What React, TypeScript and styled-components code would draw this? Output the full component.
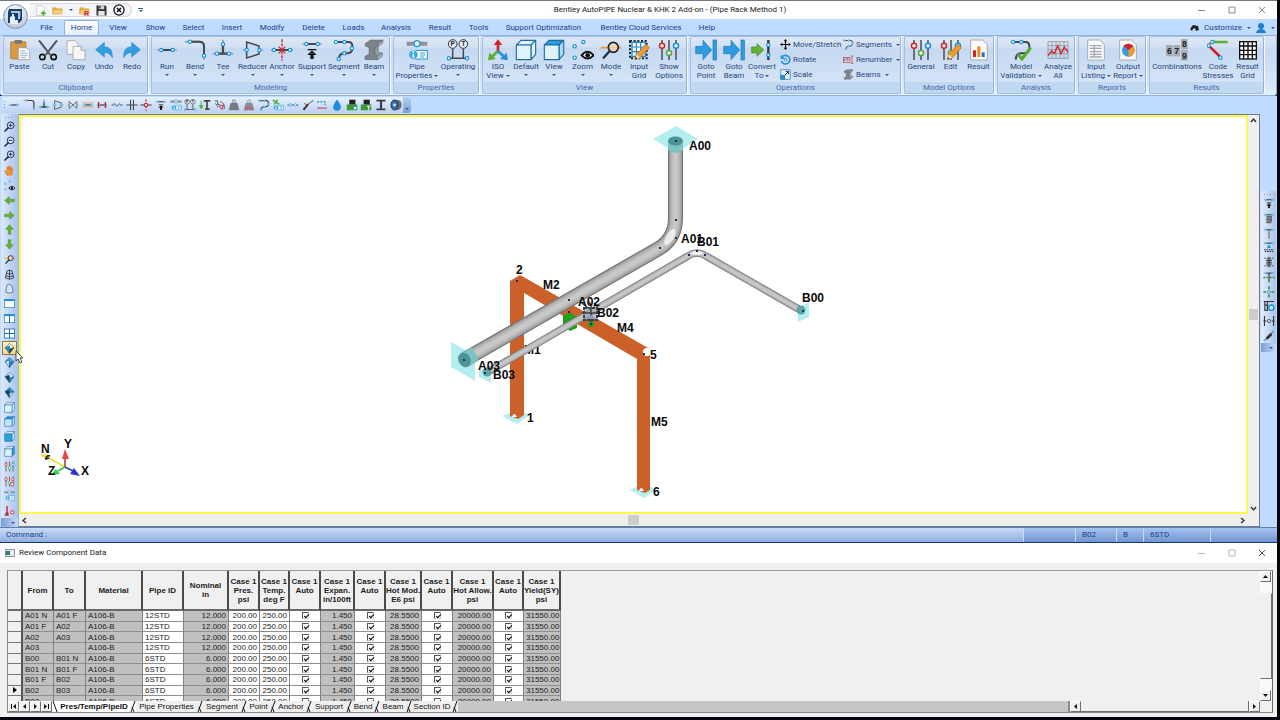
import React from "react";
import styled, { createGlobalStyle } from "styled-components";

const UI = 'Roboto, "Open Sans", sans-serif';
const ARIAL = '"Liberation Sans", Arial, sans-serif';

const Global = createGlobalStyle`
  * { box-sizing: border-box; }
  html, body { margin: 0; height: 100%; background: #05050d; }
  #root { height: 100%; }
  button { font: inherit; color: inherit; border: 0; background: none; padding: 0; margin: 0; cursor: default; }
  svg { display: block; }
`;

/* ---------- drawing primitives (66 x 66 grid) ---------- */

const BLUE = "#1793d8";
const DARK = "#45484d";
const PALE = "#a3a9b1";

const Node = ({ x, y, r = 5, c = BLUE }: { x: number; y: number; r?: number; c?: string }) => (
  <circle cx={x} cy={y} r={r} fill="#eaf8ff" stroke={c} strokeWidth={3.4} />
);
const Pipe = ({ d, c = DARK, w = 6 }: { d: string; c?: string; w?: number }) => (
  <path d={d} fill="none" stroke={c} strokeWidth={w} strokeLinejoin="round" />
);

const Cube = ({ top = "#dff3fd", front = "#dff3fd", side = "#dff3fd" }) => (
  <g stroke="#1c6ea6" strokeWidth={3.4} strokeLinejoin="round">
    <path d="M4 18 L18 4 H62 L48 18 Z" fill={top} />
    <path d="M48 18 L62 4 V46 L48 62 Z" fill={side} />
    <path d="M4 18 H48 V62 H4 Z" fill={front} />
  </g>
);
const Sliders = ({ a = "#d3222a", b = "#4fa63a", c = BLUE }) => (
  <g>
    <path d="M12 3 V63 M33 3 V63 M54 3 V63" stroke="#4a4e55" strokeWidth={4.5} />
    <g fill="#fff" strokeWidth={4.5}>
      <circle cx={12} cy={20} r={7.5} stroke={a} />
      <circle cx={33} cy={42} r={7.5} stroke={b} />
      <circle cx={54} cy={20} r={7.5} stroke={c} />
    </g>
  </g>
);
const Pencil = () => (
  <g>
    <path d="M22 62 L26 46 L54 16 L64 26 L37 56 Z" fill="#f29a2e" stroke="#a8641a" strokeWidth={2} />
    <path d="M22 62 L26 46 L37 56 Z" fill="#f5dcb8" />
    <path d="M22 62 L24 54 L29 59 Z" fill="#333" />
  </g>
);
const Lens = ({ sign }: { sign?: "+" | "-" | "o" }) => (
  <g fill="none" stroke="#20304a">
    <circle cx={40} cy={26} r={20} strokeWidth={6} fill="#d9e9fb" />
    <path d="M25 41 L6 60" strokeWidth={10} strokeLinecap="round" />
    {sign && <path d="M29 26 H51" strokeWidth={6} />}
    {sign && sign !== "-" && <path d="M40 15 V37" strokeWidth={6} />}
  </g>
);
const Iso = ({ a, b, c }: { a: string; b: string; c: string }) => (
  <g stroke="#1d5d86" strokeWidth={3.5} strokeLinejoin="round">
    <path d="M33 3 L60 28 L33 36 L6 28 Z" fill={a} />
    <path d="M6 28 L33 18 V64 Z" fill={b} />
    <path d="M60 28 L33 38 V64 Z" fill={c} />
  </g>
);
const Arrow = ({ turn = 0 }: { turn?: number }) => (
  <path
    transform={`rotate(${turn} 33 33)`}
    d="M4 25 H34 V10 L62 33 L34 56 V41 H4 Z"
    fill="#62b32f"
    stroke="#3d8420"
    strokeWidth={2.5}
  />
);
const Goto = () => (
  <g fill="#2f9be0" stroke="#1b78b5" strokeWidth={2}>
    <path d="M2 22 H24 V4 L50 33 L24 62 V44 H2 Z" />
    <rect x={54} y={3} width={10} height={60} />
  </g>
);
const Page = () => <path d="M8 3 H44 L58 17 V63 H8 Z" fill="#fafafa" stroke="#9a9fa6" strokeWidth={2.5} />;
const Weight = ({ c = "#777c83" }) => (
  <g>
    <path d="M14 22 H52 L62 62 H4 Z" fill={c} />
    <circle cx={33} cy={14} r={9} fill="none" stroke={c} strokeWidth={5} />
  </g>
);
const Info = () => (
  <g>
    <rect x={28} y={34} width={36} height={26} fill="#fff" stroke={BLUE} strokeWidth={3} />
    <path d="M42 42 H58 M42 48 H58 M42 54 H54" stroke={BLUE} strokeWidth={2.6} />
    <circle cx={22} cy={47} r={14} fill="#36a9e1" stroke="#e7f6ff" strokeWidth={2} />
    <path d="M22 44 V56 M22 37 V41" stroke="#fff" strokeWidth={5} />
  </g>
);
const IBeam = () => (
  <g stroke="#5d6269" strokeWidth={1.5}>
    <path d="M6 14 L22 3 H60 L46 14 V22 L36 26 V44 L44 50 V62 H6 V52 L18 46 V26 L6 20 Z" fill="#7d838a" />
    <path d="M46 14 L60 3 V12 L46 22 Z M44 50 L58 42 V52 L44 62 Z" fill="#a5abb2" />
    <path d="M36 26 L46 22 V40 L58 42 L44 50 L36 44 Z" fill="#969ca3" />
  </g>
);
const Eye = () => (
  <g>
    <path d="M29 49 Q46 28 65 49 Q46 68 29 49 Z" fill="#fff" stroke="#111" strokeWidth={6} />
    <circle cx={47} cy={49} r={7} fill="#111" />
  </g>
);
const Zigzag = () => <Pipe d="M3 9 H46 Q58 9 58 22 V28 Q58 42 44 43 H32 Q18 44 17 62" />;
const Bars = ({ c = "#333" }) => <path d="M8 12 H58 M8 54 H58" stroke={c} strokeWidth={5} strokeDasharray="9 5" />;
const Runner = ({ y = 15 }: { y?: number }) => (
  <g>
    <Pipe d={`M3 ${y} H63`} c={PALE} w={5} />
    <Pipe d={`M18 ${y} H50`} />
    <Node x={16} y={y} />
    <Node x={50} y={y} />
  </g>
);
const Undo = () => (
  <path d="M8 32 L34 10 V23 Q60 24 58 56 Q50 40 34 41 V54 Z" fill="#2f9fe2" stroke="#1c7fbd" strokeWidth={1.5} />
);
const Folder = () => (
  <g stroke="#c88a1c" strokeWidth={2}>
    <path d="M4 16 H26 L32 22 H58 V54 H4 Z" fill="#e9aa3a" />
    <path d="M4 54 L10 28 H63 L58 54 Z" fill="#fbd27a" />
  </g>
);

const art: Record<string, React.ReactNode> = {
  paste: (
    <g>
      <rect x={5} y={8} width={46} height={52} rx={3} fill="#d99a45" stroke="#a96d20" strokeWidth={2} />
      <rect x={17} y={3} width={22} height={11} rx={2} fill="#777" />
      <path d="M28 26 H52 L62 36 V62 H28 Z" fill="#f4f7fb" stroke="#8c96a5" strokeWidth={2} />
      <path d="M34 36 H48 M34 43 H56 M34 50 H56 M34 56 H50" stroke="#9aa8bb" strokeWidth={2.5} />
    </g>
  ),
  cut: (
    <g fill="none">
      <path d="M6 4 L40 48 M60 4 L26 48" stroke="#50555c" strokeWidth={6} />
      <circle cx={16} cy={54} r={8} stroke="#111" strokeWidth={5} />
      <circle cx={50} cy={54} r={8} stroke="#111" strokeWidth={5} />
    </g>
  ),
  copy: (
    <g stroke="#8b929c" strokeWidth={2} fill="#f7f7f8">
      <path d="M6 5 H30 L40 15 V46 H6 Z" />
      <path d="M24 22 H48 L60 34 V62 H24 Z" />
      <path d="M48 22 V34 H60" fill="#dfe3e8" />
    </g>
  ),
  undo: <Undo />,
  redo: (
    <g transform="translate(66 0) scale(-1 1)">
      <Undo />
    </g>
  ),
  run: <Runner y={33} />,
  bend: (
    <g>
      <Pipe d="M3 8 H46 Q60 8 60 22 V62" c={PALE} />
      <Pipe d="M18 8 H46 Q60 8 60 22 V48" />
      <Node x={18} y={8} />
      <Node x={60} y={50} />
    </g>
  ),
  tee: (
    <g>
      <Pipe d="M2 44 H64 M33 2 V44" c={PALE} />
      <Pipe d="M16 44 H50 M33 18 V44" w={7} />
      <Node x={33} y={16} />
      <Node x={15} y={44} />
      <Node x={51} y={44} />
    </g>
  ),
  reducer: (
    <g>
      <Pipe d="M2 33 H64" c={PALE} w={5} />
      <path d="M14 9 V57 L51 45 V21 Z" fill="#c9dcf3" stroke={DARK} strokeWidth={4.5} />
      <Node x={14} y={33} />
      <Node x={52} y={33} />
    </g>
  ),
  anchor: (
    <g>
      <Pipe d="M2 33 H64" />
      <path d="M33 1 V65" stroke="#d3222a" strokeWidth={4} strokeDasharray="9 3" />
      <path d="M23 23 L43 43 M43 23 L23 43" stroke="#d3222a" strokeWidth={3.5} />
      <Node x={9} y={33} />
      <Node x={57} y={33} />
    </g>
  ),
  support: (
    <g>
      <Runner />
      <path d="M20 32 H46" stroke="#111" strokeWidth={4} />
      <path d="M33 34 L47 48 H38 V60 H28 V48 H19 Z" fill="#111" />
    </g>
  ),
  segment: (
    <g>
      <Zigzag />
      <Node x={9} y={9} />
      <Node x={34} y={9} />
      <Node x={57} y={28} />
      <Node x={34} y={43} />
      <Node x={17} y={60} />
    </g>
  ),
  beam: <IBeam />,
  pipeProps: (
    <g>
      <path d="M2 14 H64" stroke="#8d939b" strokeWidth={12} />
      <Node x={33} y={14} r={9} />
      <Info />
    </g>
  ),
  operating: (
    <g>
      <g fill="#e4eefb" stroke="#30343a" strokeWidth={3}>
        <circle cx={17} cy={15} r={13} />
        <circle cx={49} cy={15} r={13} />
      </g>
      <g fontFamily={ARIAL} fontSize={19} fontWeight={700} fill="#222" textAnchor="middle">
        <text x={17} y={22}>P</text>
        <text x={49} y={22}>T</text>
      </g>
      <Pipe d="M17 29 V58 M49 29 V58 M4 58 H62" w={4.5} />
      <Node x={6} y={58} />
      <Node x={60} y={58} />
    </g>
  ),
  isoView: (
    <g strokeWidth={8}>
      <path d="M33 38 V14" stroke="#d3222a" />
      <path d="M33 1 L46 18 H20 Z" fill="#d3222a" />
      <path d="M33 36 L14 54" stroke="#5bb030" />
      <path d="M3 64 L7 41 L27 60 Z" fill="#5bb030" />
      <path d="M33 36 L52 54" stroke="#2390dc" />
      <path d="M63 64 L59 41 L39 60 Z" fill="#2390dc" />
    </g>
  ),
  cube: <Cube />,
  cubeTop: <Cube top="#2b9fe0" side="#a9dcf7" />,
  cubeTopSolid: <Cube top="#2b9fe0" front="#bfe6fb" side="#bfe6fb" />,
  cubeFront: <Cube front="#2b9fe0" />,
  cubeSide: <Cube side="#2b9fe0" />,
  zoom: (
    <g>
      <Node x={34} y={9} />
      <Node x={8} y={22} />
      <Node x={8} y={56} />
      <Eye />
    </g>
  ),
  mode: (
    <g>
      <path d="M2 26 H64" stroke="#ee9a3a" strokeWidth={5} />
      <circle cx={40} cy={25} r={15} fill="#f7d9b4" fillOpacity={0.7} stroke="#222" strokeWidth={5} />
      <path d="M29 36 L11 56" stroke="#20304a" strokeWidth={7} strokeLinecap="round" />
    </g>
  ),
  inputGrid: (
    <g>
      <rect x={6} y={6} width={50} height={52} fill="none" stroke="#222" strokeWidth={6} strokeDasharray="6 5" />
      <rect x={12} y={10} width={40} height={42} fill="#fff" stroke="#1c86c8" strokeWidth={4} />
      <path d="M25 10 V52 M38 10 V52 M12 24 H52 M12 38 H52" stroke="#1c86c8" strokeWidth={3.5} />
      <Pencil />
    </g>
  ),
  sliders: <Sliders />,
  slidersRed: (
    <g>
      <Sliders c="#d3222a" />
      <circle cx={50} cy={50} r={10} fill="#fff" stroke="#d3222a" strokeWidth={5} />
    </g>
  ),
  goto: <Goto />,
  convert: (
    <g>
      <path d="M2 24 H18 V14 L38 33 L18 52 V42 H2 Z" fill="#62b32f" stroke="#3d8420" strokeWidth={2} />
      <Pipe d="M52 3 V63" c="#333" w={7} />
      <Node x={52} y={18} />
      <Node x={52} y={48} />
    </g>
  ),
  move: (
    <g fill="#111">
      <path d="M33 10 V56 M10 33 H56" stroke="#111" strokeWidth={7} />
      <path d="M33 0 L44 14 H22 Z M33 66 L44 52 H22 Z M0 33 L14 22 V44 Z M66 33 L52 22 V44 Z" />
    </g>
  ),
  rotate: (
    <g fill="none">
      <path d="M12 18 A26 26 0 1 1 8 42" stroke="#2390dc" strokeWidth={10} />
      <path d="M4 4 V30 H30 Z" fill="#2390dc" />
      <circle cx={34} cy={34} r={8} stroke="#2390dc" strokeWidth={5} />
    </g>
  ),
  scale: (
    <g>
      <rect x={5} y={5} width={56} height={56} fill="#e8f5fd" stroke="#1c6ea6" strokeWidth={4} />
      <rect x={5} y={37} width={24} height={24} fill="#2390dc" stroke="#1c6ea6" strokeWidth={3} />
      <path d="M30 36 L50 16 M34 14 H52 V32" stroke="#20304a" strokeWidth={6} fill="none" />
    </g>
  ),
  renumber: (
    <g fill="none">
      <rect x={3} y={20} width={38} height={30} stroke="#c33" strokeWidth={4} />
      <path d="M10 28 V42 M20 28 H32 M20 36 H32" stroke="#333" strokeWidth={4} />
      <path d="M46 12 H62 M54 12 V56 M46 56 H62" stroke="#c33" strokeWidth={4} />
    </g>
  ),
  edit: (
    <g>
      <Sliders />
      <Pencil />
    </g>
  ),
  result: (
    <g>
      <Page />
      <rect x={15} y={34} width={9} height={20} fill="#d3222a" />
      <rect x={28} y={22} width={9} height={32} fill="#ee8a1c" />
      <rect x={41} y={40} width={9} height={14} fill="#1a6fd0" />
    </g>
  ),
  validation: (
    <g>
      <Zigzag />
      <Node x={9} y={9} />
      <Node x={34} y={9} />
      <path d="M24 46 L36 60 L62 26" fill="none" stroke="#4fae2d" strokeWidth={9} />
    </g>
  ),
  analyze: (
    <g fill="none">
      <path
        d="M3 8 H63 V58 H3 Z M15 8 V58 M27 8 V58 M39 8 V58 M51 8 V58 M3 20 H63 M3 32 H63 M3 44 H63"
        stroke="#85898f"
        strokeWidth={2.2}
      />
      <path d="M3 50 L14 36 L22 44 L32 20 L42 44 L52 24 L63 40" stroke="#d3222a" strokeWidth={4} />
    </g>
  ),
  listing: (
    <g>
      <Page />
      <path d="M14 20 H50 M14 28 H50 M14 38 H50 M14 46 H50 M14 54 H50 M28 20 V56" stroke="#a5a9ae" strokeWidth={4} />
    </g>
  ),
  report: (
    <g>
      <Page />
      <circle cx={34} cy={34} r={19} fill="#2f9be0" />
      <path d="M34 34 L20 20 A19 19 0 0 1 49 22 Z" fill="#d3222a" />
      <path d="M34 34 L49 22 A19 19 0 0 1 34 53 Z" fill="#ee9a2c" />
    </g>
  ),
  codes: (
    <g>
      <path d="M16 9 H62" stroke="#5bb030" strokeWidth={8} />
      <path d="M4 18 L14 9" stroke="#ee9a2c" strokeWidth={8} />
      <path d="M5 20 L40 54" stroke="#c8202a" strokeWidth={8} />
      <Node x={16} y={9} />
      <Node x={5} y={20} />
      <Node x={40} y={56} />
    </g>
  ),
  grid: (
    <g>
      <rect x={8} y={8} width={50} height={52} fill="#fff" stroke="#111" strokeWidth={4} />
      <path d="M20 8 V60 M33 8 V60 M46 8 V60 M8 21 H58 M8 34 H58 M8 47 H58" stroke="#111" strokeWidth={4} />
    </g>
  ),
  newDoc: (
    <g>
      <Page />
      <path d="M50 34 V64 M35 49 H65" stroke="#4fae2d" strokeWidth={9} />
    </g>
  ),
  open: <Folder />,
  openR: (
    <g>
      <Folder />
      <text x={30} y={64} fontFamily={ARIAL} fontSize={42} fontWeight={700} fill="#c8202a">R</text>
    </g>
  ),
  save: (
    <g>
      <path d="M3 3 H56 L63 10 V63 H3 Z" fill="#333" />
      <rect x={17} y={3} width={32} height={22} fill="#cfd4da" />
      <rect x={14} y={36} width={38} height={27} fill="#e8e8e8" />
      <rect x={20} y={6} width={8} height={15} fill="#333" />
    </g>
  ),
  exit: (
    <g fill="none" stroke="#111">
      <circle cx={33} cy={33} r={28} strokeWidth={7} />
      <path d="M22 22 L44 44 M44 22 L22 44" strokeWidth={8} />
    </g>
  ),
  valve: (
    <g>
      <Pipe d="M2 33 H64" c={PALE} w={5} />
      <path d="M12 14 V52 L54 14 V52 Z" fill="#dce8f7" stroke="#5c6570" strokeWidth={5} />
    </g>
  ),
  flange: (
    <g>
      <path d="M4 22 H62 M4 44 H62" stroke="#e5a05a" strokeWidth={5} />
      <Runner y={33} />
    </g>
  ),
  nozzle: (
    <g>
      <Runner y={33} />
      <path d="M14 16 V50 M52 16 V50" stroke="#c8202a" strokeWidth={8} />
    </g>
  ),
  flex: (
    <g>
      <path d="M3 33 H12 Q20 18 26 33 Q33 48 40 33 Q47 18 54 33 H64" fill="none" stroke={DARK} strokeWidth={5} />
      <Node x={12} y={33} r={4} />
      <Node x={54} y={33} r={4} />
    </g>
  ),
  plates: <path d="M2 33 H64 M25 4 V62 M41 4 V62" stroke="#444" strokeWidth={6} />,
  cross: (
    <g>
      <path d="M33 2 V64" stroke="#c8202a" strokeWidth={6} strokeDasharray="12 6" />
      <Pipe d="M2 33 H64" />
      <circle cx={33} cy={33} r={9} fill="#fff" stroke="#c8202a" strokeWidth={6} />
    </g>
  ),
  load: (
    <g>
      <path d="M26 10 H62 M44 10 V56 M34 56 H58" stroke="#444" strokeWidth={9} />
      <path d="M12 10 V40 M2 34 L12 54 L22 34" fill="#4fae2d" stroke="#4fae2d" strokeWidth={5} />
    </g>
  ),
  motion: (
    <g fill="none">
      <path d="M4 10 H20 V30 H34 M8 24 L22 44 M34 14 Q62 22 56 54" stroke="#555" strokeWidth={5} />
      <path d="M28 40 L52 34 L44 58 Z" stroke="#c8202a" strokeWidth={5} />
    </g>
  ),
  weight: <Weight />,
  weightRed: (
    <g>
      <Weight c="#8b8f95" />
      <path d="M14 62 V44 M26 62 V38 M40 62 V38 M52 62 V44" stroke="#d0545a" strokeWidth={5} />
    </g>
  ),
  greenProps: (
    <g>
      <path d="M4 6 L40 30 M30 4 L12 30" stroke="#4fae2d" strokeWidth={8} />
      <Info />
    </g>
  ),
  link: (
    <g>
      <Pipe d="M2 33 H64" w={4} />
      <Node x={18} y={33} r={7} />
      <Node x={46} y={33} r={7} />
    </g>
  ),
  hanger: (
    <g>
      <path d="M8 60 L34 28" stroke="#333" strokeWidth={11} />
      <path d="M34 28 L62 8" stroke="#777" strokeWidth={6} />
      <path d="M12 24 L30 36" stroke="#c8202a" strokeWidth={5} />
    </g>
  ),
  dims: (
    <g>
      <path d="M6 16 H60" stroke={BLUE} strokeWidth={6} strokeDasharray="12 6" />
      <path d="M6 50 H60" stroke="#c8202a" strokeWidth={5} />
      <Node x={50} y={30} r={4} />
    </g>
  ),
  drop: <path d="M33 3 Q56 34 54 44 A21 21 0 0 1 12 44 Q12 32 33 3 Z" fill="#1b8fdc" />,
  personA: (
    <g>
      <path d="M4 30 H62 V62 H4 Z" fill="#3b9a36" />
      <rect x={18} y={4} width={34} height={26} fill="#222" />
      <Node x={50} y={50} r={9} />
    </g>
  ),
  personB: (
    <g>
      <path d="M4 30 H62 V62 H4 Z" fill="#3b9a36" />
      <rect x={20} y={4} width={34} height={26} fill="#222" />
      <path d="M38 40 H58 M48 40 V62" stroke="#e8f3fb" strokeWidth={6} />
    </g>
  ),
  iSection: <path d="M8 4 H58 V14 H39 V52 H58 V62 H8 V52 H27 V14 H8 Z" fill="#3a3d42" />,
  disc: (
    <g>
      <path d="M24 6 H44 Q64 10 64 33 Q64 56 44 60 H24 Z" fill="#6a7078" />
      <ellipse cx={25} cy={33} rx={20} ry={28} fill="#2f6fae" stroke="#333" strokeWidth={5} />
      <circle cx={25} cy={33} r={8} fill="#cfe3f6" />
    </g>
  ),
  zoomIn: <Lens sign="+" />,
  zoomOut: <Lens sign="-" />,
  zoomFit: <Lens sign="o" />,
  hand: (
    <path
      d="M16 62 L4 38 Q4 30 12 36 L17 42 V14 Q21 8 25 14 V30 V8 Q29 2 34 8 V30 V10 Q39 5 43 11 V32 V18 Q48 12 53 19 V46 L46 62 Z"
      fill="#f0913a"
      stroke="#c96f1f"
      strokeWidth={2}
    />
  ),
  right: <Arrow />,
  left: <Arrow turn={180} />,
  up: <Arrow turn={-90} />,
  down: <Arrow turn={90} />,
  wire: (
    <g fill="none" stroke="#2b3440" strokeWidth={5}>
      <path d="M18 12 Q33 0 48 12 L58 54 Q33 68 8 54 Z M33 6 V62 M14 26 Q33 36 52 26 M11 42 Q33 52 55 42" />
    </g>
  ),
  solid: <path d="M18 14 Q33 0 46 14 L56 54 Q33 68 10 54 Z" fill="#d5e5f3" stroke="#4d7291" strokeWidth={5} />,
  win1: (
    <g>
      <rect x={2} y={8} width={62} height={50} fill="#fff" stroke="#1c7fbd" strokeWidth={4} />
      <path d="M2 13 H64" stroke="#1c8ed4" strokeWidth={11} />
    </g>
  ),
  win2: (
    <g>
      <rect x={2} y={8} width={62} height={50} fill="#fff" stroke="#1c7fbd" strokeWidth={4} />
      <path d="M2 13 H64" stroke="#1c8ed4" strokeWidth={11} />
      <path d="M33 10 V58" stroke="#1c6ea6" strokeWidth={6} />
    </g>
  ),
  win4: (
    <g>
      <rect x={2} y={6} width={62} height={54} fill="#fff" stroke="#1c6ea6" strokeWidth={5} />
      <path d="M33 6 V60 M2 33 H64" stroke="#1c6ea6" strokeWidth={6} />
    </g>
  ),
  iso1: <Iso a="#f4f8ee" b="#3c8db8" c="#1e4436" />,
  iso2: <Iso a="#4aa7dc" b="#b9dff5" c="#2f86bd" />,
  iso3: <Iso a="#e9f6ff" b="#173f5e" c="#2b8cc9" />,
  iso4: <Iso a="#2b8cc9" b="#173f5e" c="#d9effb" />,
  thermo: (
    <g>
      <path d="M18 6 V44" stroke="#c8202a" strokeWidth={8} />
      <circle cx={18} cy={52} r={10} fill="#c8202a" />
      <circle cx={50} cy={44} r={10} fill="#fff" stroke="#c8202a" strokeWidth={6} />
      <path d="M2 62 H30" stroke="#444" strokeWidth={4} />
    </g>
  ),
  rod: (
    <g>
      <Runner />
      <path d="M33 18 V64" stroke="#777" strokeWidth={7} />
    </g>
  ),
  spring: (
    <g>
      <Runner />
      <path d="M20 26 H46 V34 H22 V42 H46 V50 H22 V58 H46" fill="none" stroke="#666" strokeWidth={7} />
    </g>
  ),
  ground: (
    <g>
      <Runner y={12} />
      <path d="M33 18 L44 38 H22 Z" fill={BLUE} />
      <path d="M6 48 H60 M10 58 H56" stroke="#333" strokeWidth={6} strokeDasharray="9 4" />
    </g>
  ),
  damper: (
    <g>
      <Bars />
      <path d="M18 24 H48 M18 34 H48 M18 44 H48 M33 4 V62" stroke="#333" strokeWidth={6} />
    </g>
  ),
  guide: (
    <g>
      <Runner y={12} />
      <path d="M33 12 V62" stroke="#333" strokeWidth={6} />
      <path d="M2 36 H64" stroke="#3f8c3f" strokeWidth={8} strokeDasharray="12 5" />
    </g>
  ),
  guide4: (
    <g>
      <path d="M2 33 H64 M33 2 V64" stroke="#3f8c3f" strokeWidth={9} strokeDasharray="16 6" />
      <Node x={33} y={33} r={7} />
    </g>
  ),
  clampGear: (
    <g>
      <path d="M4 8 H60 M8 28 H28 M8 56 H28 M10 8 V60 M24 8 V60" stroke="#333" strokeWidth={6} />
      <circle cx={46} cy={42} r={14} fill="#eaf8ff" stroke={BLUE} strokeWidth={8} />
    </g>
  ),
  gap: (
    <g>
      <path d="M8 6 V60 M58 6 V60 M2 33 H18 M48 33 H64" stroke="#333" strokeWidth={6} />
      <circle cx={33} cy={33} r={9} fill="none" stroke="#555" strokeWidth={5} />
    </g>
  ),
  strut: (
    <g>
      <path d="M8 58 L58 8" stroke="#555" strokeWidth={6} />
      <path d="M20 48 L46 22" stroke="#333" strokeWidth={15} />
      <Node x={9} y={57} />
      <Node x={57} y={9} />
    </g>
  ),
};

const IconSvg = styled.svg<{ $s: number }>`
  width: ${(p) => p.$s}px;
  height: ${(p) => p.$s}px;
  flex: none;
`;
const Icon = ({ name, size = 22 }: { name: string; size?: number }) => (
  <IconSvg $s={size} viewBox="0 0 66 66" aria-hidden="true">
    {art[name]}
  </IconSvg>
);

/* ---------- shell ---------- */

const Shell = styled.div`
  display: flex;
  flex-direction: column;
  height: 100vh;
  min-height: 480px;
  margin-right: 3px;
  padding-bottom: 3px;
  border-top: 1px solid #77787c;
  font: 8px/10px ${UI};
  color: #24487f;
  overflow: hidden;
`;

const TitleBar = styled.header`
  position: relative;
  display: flex;
  align-items: center;
  height: 18px;
  flex: none;
  background: #fff;
`;
const Orb = styled.button`
  position: absolute;
  left: 3px;
  top: 3px;
  z-index: 2;
  width: 25px;
  height: 25px;
  border-radius: 50%;
  border: 1px solid #8195b0;
  background: radial-gradient(circle at 50% 30%, #fff, #c7d0dc 70%, #9fadc0);
  svg { margin: auto; }
`;
const QuickAccess = styled.div`
  display: flex;
  align-items: center;
  gap: 6px;
  height: 14px;
  margin-left: 30px;
  padding: 0 6px 0 5px;
  border: 1px solid #d5d8de;
  border-left: 0;
  border-radius: 0 8px 8px 0;
  background: #f3f5f8;
`;
const Caret = styled.span`
  width: 0;
  height: 0;
  border: 2px solid transparent;
  border-top-color: #34568c;
  border-bottom: 0;
`;
const MoreCaret = styled.button`
  display: flex;
  flex-direction: column;
  align-items: center;
  gap: 1px;
  margin-left: 6px;
  &::before { content: ""; width: 5px; height: 1px; background: #34568c; }
`;
const AppTitle = styled.h1`
  flex: 1;
  margin: 0 0 0 10px;
  text-align: center;
  font: 400 8px/12px ${UI};
  color: #1a1a1a;
`;
const WinControls = styled.div<{ $dim?: boolean }>`
  display: flex;
  color: ${(p) => (p.$dim ? "#555" : "#8d8d8d")};
  button { display: flex; justify-content: center; width: 30px; }
`;

const TabBar = styled.nav`
  display: flex;
  align-items: flex-end;
  height: 16px;
  flex: none;
  padding-left: 29px;
  background: #bfdbff;
`;
const Tab = styled.button<{ $w: number; $on?: boolean }>`
  width: ${(p) => p.$w}px;
  height: 15px;
  color: #15428b;
  white-space: nowrap;
  border-radius: 2px 2px 0 0;
  border: ${(p) => (p.$on ? "1px solid #8db2e3" : "1px solid transparent")};
  border-bottom: 0;
  background: ${(p) => (p.$on ? "linear-gradient(#fdfeff, #e4effb)" : "none")};
`;
const TabTools = styled.div`
  display: flex;
  align-items: center;
  gap: 5px;
  margin-left: auto;
  padding-right: 2px;
  height: 15px;
  color: #15428b;
`;

const Ribbon = styled.div`
  display: flex;
  gap: 3px;
  height: 61px;
  flex: none;
  padding: 0 2px 1px;
  border: 1px solid #8db2e3;
  border-left-color: #c9dcf3;
  border-radius: 0 0 3px 3px;
  background: linear-gradient(#dbe7f6, #c8daf1 25%, #d6e6fa 85%, #e4f3ff);
  overflow: hidden;
`;
const GroupBox = styled.section`
  display: flex;
  flex-direction: column;
  flex: none;
  border: 1px solid #a5c0e2;
  border-right-color: #93b3dc;
  border-radius: 2px;
  box-shadow: 1px 0 0 #f2f8ff;
  background: linear-gradient(#dde8f6, #d2e0f3 18%, #c6d9f0 20%, #d8e7fa);
`;
const GroupBody = styled.div`
  display: flex;
  flex: 1;
  padding: 0 1px;
`;
const GroupCaption = styled.h2`
  margin: 0;
  height: 11px;
  text-align: center;
  font: 400 8px/11px ${UI};
  color: #3e6aaa;
  background: #c1d8f1;
`;
const BigBtn = styled.button<{ $w: number }>`
  display: flex;
  flex-direction: column;
  align-items: center;
  width: ${(p) => p.$w}px;
  padding-top: 2px;
  white-space: nowrap;
  line-height: 9px;
  span { display: flex; align-items: center; gap: 2px; }
  ${IconSvg} + span { margin-top: 1px; }
  ${Caret} { margin-top: 3px; }
  span ${Caret} { margin-top: 0; }
`;
const SmallStack = styled.div<{ $w: number }>`
  display: flex;
  flex-direction: column;
  gap: 4px;
  width: ${(p) => p.$w}px;
  padding: 2px 0 0 4px;
`;
const SmallBtn = styled.button`
  display: flex;
  align-items: center;
  gap: 2px;
  height: 11px;
  white-space: nowrap;
  ${Caret} { margin-left: 2px; }
`;

const Numbers = () => (
  <IconSvg $s={22} viewBox="0 0 66 66" aria-hidden="true">
    <g fill="#a8adb5">
      <rect x={0} y={18} width={20} height={34} />
      <rect x={22} y={18} width={20} height={34} />
      <rect x={45} y={0} width={20} height={31} />
      <rect x={45} y={34} width={20} height={31} />
    </g>
    <g fontFamily={ARIAL} fontSize={26} fontWeight={700} fill="#222">
      <text x={3} y={44}>6</text>
      <text x={25} y={44}>7</text>
      <text x={48} y={25}>8</text>
      <text x={48} y={59}>9</text>
    </g>
  </IconSvg>
);

type Btn = [label: string, icon: string, width: number, second?: string, menu?: boolean];
const Big = ({ b: [label, icon, w, second, menu] }: { b: Btn }) => (
  <BigBtn $w={w}>
    {icon === "numbers" ? <Numbers /> : <Icon name={icon} />}
    <span>{label}</span>
    {second && (
      <span>
        {second}
        {menu && <Caret />}
      </span>
    )}
    {!second && menu && <Caret />}
  </BigBtn>
);
const Group = ({ title, items, children }: { title: string; items: Btn[]; children?: React.ReactNode }) => (
  <GroupBox>
    <GroupBody>
      {items.map((b, i) => (
        <Big key={i} b={b} />
      ))}
      {children}
    </GroupBody>
    <GroupCaption>{title}</GroupCaption>
  </GroupBox>
);

/* ---------- workspace ---------- */

const IconStrip = styled.div`
  display: flex;
  align-items: center;
  height: 18px;
  flex: none;
  padding-left: 2px;
  background: #bfdbff;
`;
const StripBody = styled.div`
  display: flex;
  align-items: center;
  height: 16px;
  padding-left: 1px;
  border-radius: 2px;
  background: linear-gradient(#e6f0fd, #bcd2f0);
`;
const Grip = styled.i<{ $across?: boolean }>`
  flex: none;
  width: ${(p) => (p.$across ? "9px" : "1px")};
  height: ${(p) => (p.$across ? "1px" : "9px")};
  margin: 1px;
  background: repeating-linear-gradient(
    ${(p) => (p.$across ? "90deg" : "180deg")},
    #7d9cc8 0 1px,
    transparent 1px 3px
  );
`;
const StripIcons = styled.div`
  display: grid;
  grid-template-columns: repeat(27, 1fr);
  width: 396px;
  margin-left: 1px;
  button { display: flex; justify-content: center; }
`;
const StripEnd = styled.button`
  display: flex;
  align-items: flex-end;
  justify-content: center;
  width: 8px;
  height: 16px;
  padding-bottom: 3px;
  border-radius: 0 3px 3px 0;
  background: linear-gradient(#b5cff2, #7c9fd3);
`;

const Work = styled.div`
  display: flex;
  flex: 1;
  min-height: 0;
  background: #bfdbff;
`;
const SideBar = styled.div`
  display: flex;
  flex-direction: column;
  align-items: center;
  width: 17px;
  flex: none;
  padding-top: 2px;
  margin-left: 1px;
  background: linear-gradient(90deg, #dce9fb, #a9c3ea);
`;
const SideIcons = styled.div`
  display: grid;
  grid-auto-rows: 1fr;
  flex: 1;
  width: 15px;
  min-height: 0;
`;
const SideBtn = styled.button<{ $on?: boolean }>`
  display: flex;
  align-items: center;
  justify-content: center;
  min-height: 0;
  border: 1px solid ${(p) => (p.$on ? "#8d7a4a" : "transparent")};
  background: ${(p) => (p.$on ? "linear-gradient(#fff0c8, #ffd980)" : "none")};
`;
const SideEnd = styled.button`
  display: flex;
  align-items: center;
  justify-content: flex-end;
  width: 100%;
  height: 9px;
  padding-right: 3px;
  background: linear-gradient(90deg, #7c9fd3, #c6d9f4);
`;
const Frame = styled.main`
  display: grid;
  grid-template-columns: minmax(0, 1fr) 11px;
  grid-template-rows: minmax(0, 1fr) 12px;
  flex: 1;
  min-width: 0;
  border: 1px solid #6f7b8a;
  border-left-color: #a5b4c4;
  background: #efefef;
`;
const Canvas = styled.div`
  min-width: 0;
  min-height: 0;
  border: 2px solid #fbf84e;
  background: #fff;
  svg { width: 100%; height: 100%; }
`;
const VScroll = styled.div`
  display: flex;
  flex-direction: column;
  align-items: center;
  justify-content: space-between;
  padding: 2px 0;
  i { width: 9px; height: 11px; background: #cdcdcd; }
`;
const HScroll = styled.div`
  display: flex;
  align-items: center;
  justify-content: space-between;
  padding: 0 2px;
  i { width: 11px; height: 10px; background: #cdcdcd; }
`;
const RightDock = styled.div`
  width: 17px;
  flex: none;
  padding: 77px 1px 0;
`;
const RightBar = styled.div`
  display: flex;
  flex-direction: column;
  align-items: center;
  padding-top: 2px;
  border-radius: 2px;
  background: linear-gradient(90deg, #e3eefc, #a9c3ea);
`;
const RightIcons = styled.div`
  display: grid;
  grid-auto-rows: 1fr;
  height: 147px;
  button { display: flex; align-items: center; }
`;

const Chevron = ({ d }: { d: string }) => (
  <svg width="7" height="7" viewBox="0 0 7 7" aria-hidden="true">
    <path d={d} fill="none" stroke="#333" strokeWidth={1.4} />
  </svg>
);

const shades: [string, number][] = [
  ["#707070", 1],
  ["#949494", 0.88],
  ["#adadad", 0.74],
  ["#bbbbbb", 0.55],
  ["#c8c8c8", 0.3],
];
const Tube = ({ d, w }: { d: string; w: number }) => (
  <g fill="none">
    {shades.map(([c, k]) => (
      <path key={c} d={d} stroke={c} strokeWidth={w * k} />
    ))}
  </g>
);
const Dots = ({ at }: { at: [number, number][] }) => (
  <g fill="#1b2c66">
    {at.map(([x, y]) => (
      <rect key={`${x}-${y}`} x={x - 1} y={y - 1} width={2} height={2} />
    ))}
  </g>
);

const labels: [string, number, number][] = [
  ["A00", 689, 150],
  ["A01", 681, 243],
  ["B01", 697, 246],
  ["B00", 802, 302],
  ["2", 516, 274],
  ["M2", 543, 289],
  ["A02", 578, 306],
  ["B02", 597, 317],
  ["M4", 617, 332],
  ["5", 650, 359],
  ["M5", 651, 426],
  ["1", 527, 422],
  ["6", 653, 496],
  ["A03", 478, 370],
  ["B03", 493, 379],
  ["N", 41, 453],
  ["Y", 64, 448],
  ["Z", 48, 475],
  ["X", 81, 475],
];

const Model = () => (
  <svg viewBox="21 117 1225 395" role="img" aria-label="Pipe rack model">
    <g fill="#b5eeee">
      <path d="M653 139 L676 126 L698 139 L676 153 Z" />
      <path d="M502 416 L517 410 L530 415 L517 424 Z" />
      <path d="M630 490 L644 483 L656 490 L644 498 Z" />
      <path d="M451 342 L475 355 V381 L451 367 Z" />
      <path d="M479 369 L491 376 V383 L479 377 Z" />
      <path d="M798 308 L809 302 V317 L798 322 Z" />
    </g>
    <g fill="#cb6029">
      <path d="M510 281 L520 275 L650 349 V358 L637 359 L524 293 V415 L518 419 L510 416 Z" />
      <path d="M637 352 H650 V490 L645 493 L637 490 Z" />
    </g>
    <path d="M512 417 Q514 411 517 417 Z M639 491 Q641 485 644 491 Z" fill="#fff" />
    <circle cx={647} cy={352} r={4} fill="#fff" />
    <text x={524} y={354} fontFamily={ARIAL} fontSize={12} fontWeight={700}>M1</text>
    <path d="M563 315 L570 313 L577 317 V328 L570 331 L563 325 Z" fill="#19a319" />
    <Tube w={15} d="M675.5 141 V218 Q675.5 239 658 249 L464 360" />
    <ellipse cx={670} cy={237} rx={4} ry={9} transform="rotate(32 670 237)" fill="#fff" opacity={0.65} />
    <path d="M668 141 V150 Q676 156 683 150 V141 Z" fill="#7cc3c3" />
    <ellipse cx={675.5} cy={141} rx={7.5} ry={4.5} fill="#4d9496" />
    <path d="M460 354 L471 348 Q477 352 478 361 L468 367 Z" fill="#7cc3c3" />
    <ellipse cx={464.5} cy={360} rx={6} ry={7.5} transform="rotate(-28 464.5 360)" fill="#4d9496" />
    <Tube w={7.5} d="M802 311 L706 256 Q697 250 688 256 L486 373" />
    <ellipse cx={697} cy={253} rx={6} ry={2} fill="#fff" opacity={0.8} />
    <circle cx={801} cy={310} r={4.5} fill="#5aa5a8" />
    <circle cx={487} cy={372} r={4.5} fill="#5aa5a8" />
    <circle cx={591} cy={324} r={3} fill="#19a319" />
    <g fill="none" stroke="#3b3e44">
      <path d="M584 308 H597 V320 H584 Z" strokeWidth={2} strokeDasharray="3 1" fill="#9aa0ab" fillOpacity={0.6} />
      <path d="M591 304 V322 M582 313 H600" strokeWidth={1.5} />
      <path d="M582 303 L588 308 M588 301 L592 306 M594 303 L598 307" strokeWidth={1.5} />
    </g>
    <path d="M586 319 L591 315 L596 319 Z" fill="#8a9bd0" />
    <Dots
      at={[
        [676, 141],
        [676, 220],
        [676, 238],
        [660, 248],
        [569, 300],
        [569, 312],
        [464, 360],
        [485, 373],
        [517, 281],
        [644, 354],
        [689, 255],
        [697, 251],
        [705, 255],
        [803, 311],
        [591, 324],
      ]}
    />
    <g strokeWidth={1.5}>
      <path d="M65 467 L43 455" stroke="#f2dc30" />
      <path d="M40 454 L49 455 L46 460 Z" fill="#f2dc30" />
      <path d="M65 467 V457" stroke="#a33" />
      <path d="M65 449 L69 459 H62 Z" fill="#e8434a" />
      <path d="M65 467 L73 471" stroke="#33c" />
      <path d="M80 476 L70 474 L74 468 Z" fill="#2c33cc" />
      <path d="M65 467 L58 471" stroke="#3c3" />
      <path d="M51 475 L56 469 L60 474 Z" fill="#35d04c" />
      <path d="M50 456 Q46 455 46 459 L49 458" fill="none" stroke="#111" />
    </g>
    <g fontFamily={ARIAL} fontSize={12} fontWeight={700} fill="#0a0a0a">
      {labels.map(([t, x, y]) => (
        <text key={t} x={x} y={y}>
          {t}
        </text>
      ))}
    </g>
  </svg>
);

const Pointer = styled.svg`
  position: absolute;
  left: 15px;
  top: 350px;
  z-index: 3;
`;

const StatusBar = styled.footer`
  display: flex;
  height: 16px;
  flex: none;
  border-top: 1px solid #5f7fb0;
  border-bottom: 1px solid #123a6b;
  line-height: 14px;
  color: #15428b;
`;
const Pane = styled.span<{ $w?: number }>`
  flex: ${(p) => (p.$w ? `0 0 ${p.$w}px` : "1")};
  padding-left: 6px;
  background: ${(p) => (p.$w ? "linear-gradient(#a6c5f2, #7395d0)" : "linear-gradient(#c9dcf6, #8faee0)")};
  border-left: ${(p) => (p.$w ? "1px solid #c9dcf6" : "0")};
`;

/* ---------- component data window ---------- */

const DataWindow = styled.section`
  display: flex;
  flex-direction: column;
  flex: none;
  background: #f0f0f0;
`;
const DataTitle = styled.header`
  display: flex;
  align-items: center;
  height: 20px;
  padding-left: 5px;
  background: #fff;
  h2 { flex: 1; margin: 0 0 0 4px; font: 400 8px/12px ${UI}; color: #1a1a1a; }
`;
const GridFrame = styled.div`
  display: grid;
  grid-template-columns: minmax(0, 1fr) 12px;
  grid-template-rows: 130px 11px;
  margin: 7px 4px 4px 7px;
  border: 1px solid #8b8b8b;
  border-color: #9a9a9a #696969 #8b8b8b #8b8b8b;
`;
const TableClip = styled.div`
  overflow: hidden;
`;
const Table = styled.table`
  table-layout: fixed;
  width: 553px;
  height: 136px;
  border-collapse: separate;
  border-spacing: 0;
  font: 8px/9px ${ARIAL};
  color: #1c1c1c;
  th, td { padding: 0; overflow: hidden; white-space: nowrap; }
  thead th {
    height: 40px;
    font-weight: 700;
    line-height: 9px;
    background: #f0f0f0;
    border-right: 2px solid #4a4a4a;
    border-bottom: 2px solid #6a6a6a;
  }
`;
const Cell = styled.td<{ $gray?: boolean; $align?: string }>`
  height: 10px;
  text-align: ${(p) => p.$align ?? "left"};
  background: ${(p) => (p.$gray ? "#c0c0c0" : "#fff")};
  border-right: 1px solid #808080;
  border-bottom: 1px solid #8f8f8f;
  && { padding: 0 2px; }
`;
const RowHead = styled.th`
  background: #f0f0f0;
  border-right: 2px solid #555;
  border-bottom: 1px solid #777;
`;
const Marker = styled.i`
  display: block;
  width: 0;
  margin-left: 5px;
  border: 3px solid transparent;
  border-left: 4px solid #000;
  border-right: 0;
`;
const Check = styled.input`
  appearance: none;
  display: block;
  width: 7px;
  height: 7px;
  margin: 0 auto;
  border: 1px solid #555;
  border-right-color: #ccc;
  border-bottom-color: #ccc;
  background: #fff;
  &:checked::after {
    content: "";
    display: block;
    width: 4px;
    height: 2px;
    margin: 1px 0 0 1px;
    border: solid #000;
    border-width: 0 0 1px 1px;
    transform: rotate(-45deg);
  }
`;
const BevelBtn = styled.button`
  display: flex;
  align-items: center;
  justify-content: center;
  width: 11px;
  height: 11px;
  flex: none;
  background: #f0f0f0;
  border: 1px solid;
  border-color: #fff #707070 #707070 #fff;
`;
const BottomBar = styled.div`
  display: flex;
  min-width: 0;
  background: #c6c6c6;
`;
const SheetTab = styled.button<{ $w: number; $on?: boolean }>`
  display: flex;
  width: ${(p) => p.$w}px;
  flex: none;
  height: 11px;
  font: ${(p) => (p.$on ? "700" : "400")} 8px/11px ${ARIAL};
  color: #111;
  background: ${(p) => (p.$on ? "#fff" : "#f0f0f0")};
  white-space: nowrap;
  span { flex: 1; text-align: center; }
`;
const DataVScroll = styled.div`
  display: flex;
  flex-direction: column;
  background: #fafafa;
  i { flex: 1; margin: 11px 0; border: 1px solid; border-color: #f0f0f0 #707070 #707070 #f0f0f0; background: #f0f0f0; }
`;
const DataHScroll = styled.div`
  display: flex;
  width: 192px;
  margin-left: auto;
  border-left: 2px solid #8b8b8b;
  background: #f0f0f0;
  i { flex: 1; border-right: 1px solid #707070; border-bottom: 1px solid #707070; }
`;

const Tri = ({ d }: { d: string }) => (
  <svg width="7" height="7" viewBox="0 0 7 7" aria-hidden="true">
    <path d={d} fill="#111" />
  </svg>
);
const Slash = ({ first }: { first?: boolean }) => (
  <svg width="6" height="11" viewBox="0 0 6 11" aria-hidden="true">
    <path d={first ? "M1 0 L5 11" : "M5 0 L1 11 M2 6 L4 11"} stroke="#111" fill="none" />
  </svg>
);

const columns: [head: string[], width: number][] = [
  [[], 15],
  [["From"], 31],
  [["To"], 32],
  [["Material"], 57],
  [["Pipe ID"], 41],
  [["Nominal", "in"], 45],
  [["Case 1", "Pres.", "psi"], 31],
  [["Case 1", "Temp.", "deg F"], 30],
  [["Case 1", "Auto", ""], 31],
  [["Case 1", "Expan.", "in/100ft"], 34],
  [["Case 1", "Auto", ""], 31],
  [["Case 1", "Hot Mod.", "E6 psi"], 36],
  [["Case 1", "Auto", ""], 31],
  [["Case 1", "Hot Allow.", "psi"], 41],
  [["Case 1", "Auto", ""], 30],
  [["Case 1", "Yield(SY)", "psi"], 37],
];
const rows = [
  ["A01 N", "A01 F", "12STD", "12.000"],
  ["A01 F", "A02", "12STD", "12.000"],
  ["A02", "A03", "12STD", "12.000"],
  ["A03", "", "12STD", "12.000"],
  ["B00", "B01 N", "6STD", "6.000"],
  ["B01 N", "B01 F", "6STD", "6.000"],
  ["B01 F", "B02", "6STD", "6.000"],
  ["B02", "B03", "6STD", "6.000"],
  ["B03", "", "6STD", "6.000"],
];
const sheetTabs: [string, number][] = [
  ["Pres/Temp/PipeID", 84],
  ["Pipe Properties", 67],
  ["Segment", 44],
  ["Point", 29],
  ["Anchor", 36],
  ["Support", 40],
  ["Bend", 28],
  ["Beam", 32],
  ["Section ID", 46],
];
const menuTabs: [string, number][] = [
  ["File", 35],
  ["Home", 35],
  ["View", 38],
  ["Show", 37],
  ["Select", 39],
  ["Insert", 38],
  ["Modify", 42],
  ["Delete", 41],
  ["Loads", 39],
  ["Analysis", 46],
  ["Result", 42],
  ["Tools", 35],
  ["Support Optimization", 95],
  ["Bentley Cloud Services", 100],
  ["Help", 32],
];
const stripIcons = [
  "run", "bend", "tee", "reducer", "valve", "flange", "nozzle", "flex", "plates",
  "cross", "support", "pipeProps", "operating", "load", "motion", "weight", "weightRed", "segment",
  "greenProps", "link", "hanger", "dims", "drop", "personA", "personB", "iSection", "disc",
];
const sideIcons = [
  "zoomIn", "zoomOut", "zoomFit", "hand", "zoom", "left", "right", "up", "down",
  "mode", "wire", "solid", "win1", "win2", "win4", "iso1", "iso2", "iso3",
  "iso4", "cube", "cubeTopSolid", "cubeFront", "cubeSide", "sliders", "slidersRed", "pipeProps", "thermo",
];
const rightIcons = ["support", "spring", "rod", "ground", "damper", "guide", "guide4", "clampGear", "gap", "strut"];

const WinButtons = ({ dim }: { dim?: boolean }) => (
  <WinControls $dim={dim}>
    {["M0 4.5 H7", "M1 1 H7 V7 H1 Z", "M1 1 L7 7 M7 1 L1 7"].map((d, i) => (
      <button key={d} aria-label={["Minimize", "Maximize", "Close"][i]}>
        <svg width="8" height="8" viewBox="0 0 8 8">
          <path d={d} fill="none" stroke={dim && i < 2 ? "#b5b5b5" : "currentColor"} />
        </svg>
      </button>
    ))}
  </WinControls>
);

const Auto = ({ id }: { id: string }) => (
  <Cell>
    <Check type="checkbox" defaultChecked aria-label={id} />
  </Cell>
);

export default function App() {
  return (
    <>
      <Global />
      <Shell>
        <TitleBar>
          <Orb aria-label="Application menu">
            <svg width="17" height="17" viewBox="0 0 17 17">
              <path d="M2 1 H15 V12 L12 15 H1 V4 Z" fill="#12406f" />
              <path d="M4 4 H12 V11" fill="none" stroke="#e6eef7" strokeWidth={1.6} />
              <path d="M3 16 V9 L5 8 V6 H7 V8 L8 9 V12 H11 V16 Z" fill="#e6eef7" />
              <path d="M13 3 V9" stroke="#7fb2dc" />
            </svg>
          </Orb>
          <QuickAccess>
            <button aria-label="New"><Icon name="newDoc" size={11} /></button>
            <button aria-label="Open"><Icon name="open" size={11} /></button>
            <Caret />
            <button aria-label="Open recent"><Icon name="openR" size={11} /></button>
            <button aria-label="Save"><Icon name="save" size={11} /></button>
            <button aria-label="Exit"><Icon name="exit" size={12} /></button>
          </QuickAccess>
          <MoreCaret aria-label="More"><Caret /></MoreCaret>
          <AppTitle>Bentley AutoPIPE Nuclear &amp; KHK 2 Add-on - (Pipe Rack Method 1)</AppTitle>
          <WinButtons />
        </TitleBar>

        <TabBar>
          {menuTabs.map(([t, w]) => (
            <Tab key={t} $w={w} $on={t === "Home"}>{t}</Tab>
          ))}
          <TabTools>
            <svg width="10" height="8" viewBox="0 0 10 8" aria-hidden="true">
              <path d="M1 5 L4 1 L9 2 L10 6 L7 7 L6 4 L4 5 L3 7 Z" fill="#222" />
            </svg>
            <span>Customize</span>
            <Caret />
            <svg width="10" height="10" viewBox="0 0 10 10" aria-hidden="true">
              <circle cx={5} cy={3} r={3} fill="#1a7fd0" />
              <path d="M0 10 Q1 6 5 6 Q9 6 10 10 Z" fill="#1a7fd0" />
            </svg>
            <Caret />
          </TabTools>
        </TabBar>

        <Ribbon>
          <Group
            title="Clipboard"
            items={[["Paste", "paste", 29], ["Cut", "cut", 28], ["Copy", "copy", 28], ["Undo", "undo", 28], ["Redo", "redo", 28]]}
          />
          <Group
            title="Modeling"
            items={[
              ["Run", "run", 28, undefined, true],
              ["Bend", "bend", 28, undefined, true],
              ["Tee", "tee", 28, undefined, true],
              ["Reducer", "reducer", 31, undefined, true],
              ["Anchor", "anchor", 28, undefined, true],
              ["Support", "support", 32, undefined, true],
              ["Segment", "segment", 32, undefined, true],
              ["Beam", "beam", 28, undefined, true],
            ]}
          />
          <Group
            title="Properties"
            items={[["Pipe", "pipeProps", 44, "Properties", true], ["Operating", "operating", 38, undefined, true]]}
          />
          <Group
            title="View"
            items={[
              ["ISO", "isoView", 28, "View", true],
              ["Default", "cube", 28, undefined, true],
              ["View", "cubeTop", 28, undefined, true],
              ["Zoom", "zoom", 29, undefined, true],
              ["Mode", "mode", 28, undefined, true],
              ["Input", "inputGrid", 28, "Grid"],
              ["Show", "sliders", 32, "Options"],
            ]}
          />
          <Group
            title="Operations"
            items={[["Goto", "goto", 28, "Point"], ["Goto", "goto", 28, "Beam"], ["Convert", "convert", 28, "To", true]]}
          >
            <SmallStack $w={63}>
              <SmallBtn><Icon name="move" size={11} />Move/Stretch</SmallBtn>
              <SmallBtn><Icon name="rotate" size={11} />Rotate</SmallBtn>
              <SmallBtn><Icon name="scale" size={11} />Scale</SmallBtn>
            </SmallStack>
            <SmallStack $w={60}>
              <SmallBtn><Icon name="segment" size={11} />Segments <Caret /></SmallBtn>
              <SmallBtn><Icon name="renumber" size={11} />Renumber <Caret /></SmallBtn>
              <SmallBtn><Icon name="beam" size={11} />Beams <Caret /></SmallBtn>
            </SmallStack>
          </Group>
          <Group
            title="Model Options"
            items={[["General", "sliders", 30], ["Edit", "edit", 29], ["Result", "result", 27]]}
          />
          <Group
            title="Analysis"
            items={[["Model", "validation", 44, "Validation", true], ["Analyze", "analyze", 30, "All"]]}
          />
          <Group
            title="Reports"
            items={[["Input", "listing", 32, "Listing", true], ["Output", "report", 32, "Report", true]]}
          />
          <Group
            title="Results"
            items={[["Combinations", "numbers", 52], ["Code", "codes", 30, "Stresses"], ["Result", "grid", 29, "Grid"]]}
          />
        </Ribbon>

        <IconStrip>
          <StripBody>
            <Grip />
            <StripIcons>
              {stripIcons.map((n) => (
                <button key={n} aria-label={n}><Icon name={n} size={12} /></button>
              ))}
            </StripIcons>
            <StripEnd aria-label="More tools"><Caret /></StripEnd>
          </StripBody>
        </IconStrip>

        <Work>
          <SideBar>
            <Grip $across />
            <SideIcons>
              {sideIcons.map((n) => (
                <SideBtn key={n} aria-label={n} $on={n === "iso1"}><Icon name={n} size={11} /></SideBtn>
              ))}
            </SideIcons>
            <SideEnd aria-label="More views"><Caret /></SideEnd>
          </SideBar>
          <Frame>
            <Canvas><Model /></Canvas>
            <VScroll>
              <Chevron d="M1 5 L3.5 2 L6 5" />
              <i />
              <Chevron d="M1 2 L3.5 5 L6 2" />
            </VScroll>
            <HScroll>
              <Chevron d="M5 1 L2 3.5 L5 6" />
              <i />
              <Chevron d="M2 1 L5 3.5 L2 6" />
            </HScroll>
            <span />
          </Frame>
          <RightDock>
            <RightBar>
              <Grip $across />
              <RightIcons>
                {rightIcons.map((n) => (
                  <button key={n} aria-label={n}><Icon name={n} size={12} /></button>
                ))}
              </RightIcons>
              <SideEnd aria-label="More supports"><Caret /></SideEnd>
            </RightBar>
          </RightDock>
        </Work>

        <StatusBar>
          <Pane>Command :</Pane>
          <Pane $w={52} />
          <Pane $w={41}>B02</Pane>
          <Pane $w={27}>B</Pane>
          <Pane $w={67}>6STD</Pane>
          <Pane $w={67} />
        </StatusBar>

        <DataWindow>
          <DataTitle>
            <svg width="10" height="8" viewBox="0 0 10 8" aria-hidden="true">
              <rect x={0.5} y={0.5} width={9} height={7} fill="#e8edf0" stroke="#8c979f" />
              <rect x={1} y={2} width={4} height={4} fill="#2f7f78" />
            </svg>
            <h2>Review Component Data</h2>
            <WinButtons dim />
          </DataTitle>
          <GridFrame>
            <TableClip>
              <Table>
                <colgroup>
                  {columns.map(([, w], i) => (
                    <col key={i} width={w} />
                  ))}
                </colgroup>
                <thead>
                  <tr>
                    {columns.map(([lines], i) => (
                      <th key={i} scope="col">
                        {lines.map((l, j) => (
                          <div key={j}>{l || "\u00a0"}</div>
                        ))}
                      </th>
                    ))}
                  </tr>
                </thead>
                <tbody>
                  {rows.map(([from, to, pipe, size], i) => (
                    <tr key={from + i}>
                      <RowHead scope="row">{i === 7 && <Marker />}</RowHead>
                      <Cell $gray>{from}</Cell>
                      <Cell $gray>{to}</Cell>
                      <Cell $gray>A106-B</Cell>
                      <Cell>{pipe}</Cell>
                      <Cell $gray $align="right">{size}</Cell>
                      <Cell $align="right">200.00</Cell>
                      <Cell $align="right">250.00</Cell>
                      <Auto id="Auto expansion" />
                      <Cell $gray $align="right">1.450</Cell>
                      <Auto id="Auto modulus" />
                      <Cell $gray $align="right">28.5500</Cell>
                      <Auto id="Auto allowable" />
                      <Cell $gray $align="right">20000.00</Cell>
                      <Auto id="Auto yield" />
                      <Cell $gray $align="right">31550.00</Cell>
                    </tr>
                  ))}
                </tbody>
              </Table>
            </TableClip>
            <DataVScroll>
              <BevelBtn aria-label="Scroll up"><Tri d="M1 5 L3.5 2 L6 5 Z" /></BevelBtn>
              <i />
              <BevelBtn aria-label="Scroll down"><Tri d="M1 2 L3.5 5 L6 2 Z" /></BevelBtn>
            </DataVScroll>
            <BottomBar>
              <BevelBtn aria-label="First sheet"><Tri d="M1 1 H2 V6 H1 Z M6 1 L3 3.5 L6 6 Z" /></BevelBtn>
              <BevelBtn aria-label="Previous sheet"><Tri d="M5 1 L2 3.5 L5 6 Z" /></BevelBtn>
              <BevelBtn aria-label="Next sheet"><Tri d="M2 1 L5 3.5 L2 6 Z" /></BevelBtn>
              <BevelBtn aria-label="Last sheet"><Tri d="M5 1 H6 V6 H5 Z M1 1 L4 3.5 L1 6 Z" /></BevelBtn>
              {sheetTabs.map(([t, w], i) => (
                <SheetTab key={t} $w={w} $on={i === 0}>
                  {i === 0 && <Slash first />}
                  <span>{t}</span>
                  <Slash />
                </SheetTab>
              ))}
              <DataHScroll>
                <BevelBtn aria-label="Scroll left"><Tri d="M5 1 L2 3.5 L5 6 Z" /></BevelBtn>
                <i />
                <BevelBtn aria-label="Scroll right"><Tri d="M2 1 L5 3.5 L2 6 Z" /></BevelBtn>
              </DataHScroll>
            </BottomBar>
            <span />
          </GridFrame>
        </DataWindow>
        <Pointer width="9" height="14" viewBox="0 0 9 14" aria-hidden="true">
          <path d="M1 1 V11 L3 9 L5 13 L7 12 L5 8 H8 Z" fill="#fff" stroke="#333" strokeWidth={0.9} />
        </Pointer>
      </Shell>
    </>
  );
}
